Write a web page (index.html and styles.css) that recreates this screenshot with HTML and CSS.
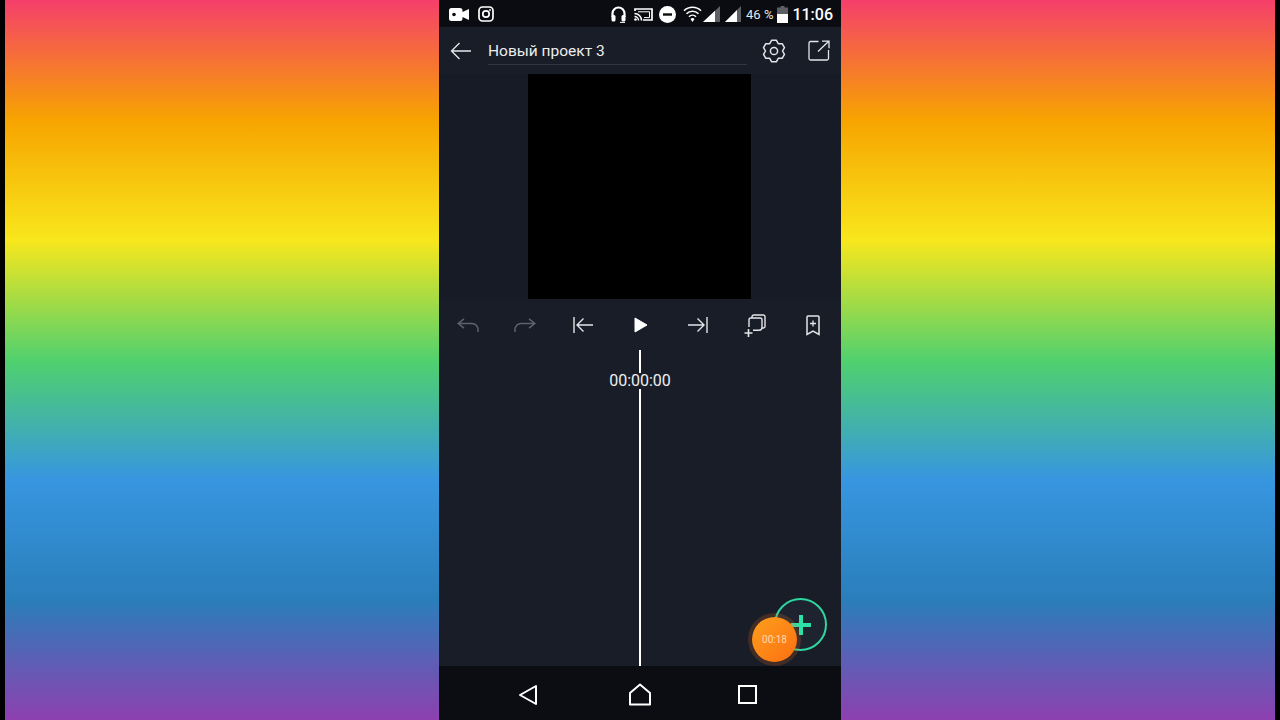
FILE: index.html
```html
<!DOCTYPE html>
<html lang="ru">
<head>
    <meta charset="UTF-8">
    <title>Новый проект 3</title>
    <link rel="stylesheet" href="styles.css">
</head>
<body>

    <div class="side"></div>

    <div class="phone">
        <div class="status">
            <svg width="20" height="13" viewBox="0 0 20 13"><path d="M2.500 0h8.500a2.500 2.500 0 0 1 2.500 2.500v1.500L20 1v11l-6.500-3v1.500A2.500 2.500 0 0 1 11 13H2.500A2.500 2.500 0 0 1 0 10.500v-8A2.500 2.500 0 0 1 2.500 0z" fill="#fff"/><circle cx="5" cy="6.500" r="1.800" fill="#0a0c11"/></svg>
            <svg width="16" height="16" viewBox="0 0 16 16" fill="none" stroke="#fff" stroke-width="1.700"><rect x="1" y="1" width="14" height="14" rx="3.500"/><circle cx="8" cy="8" r="3.200"/><circle cx="12" cy="4" r=".6" fill="#fff" stroke-width=".8"/></svg>
            <div class="status-right">
                <svg width="15" height="17" viewBox="0 0 15 17" fill="none" stroke="#fff" stroke-width="2.200"><path d="M1.500 11V7.500a6 6 0 0 1 12 0V11"/><rect x=".5" y="9" width="4" height="6.500" rx="1.500" fill="#fff" stroke="none"/><rect x="10.500" y="9" width="4" height="6.500" rx="1.500" fill="#fff" stroke="none"/><path d="M9 16.400h5" stroke-width="1"/></svg>
                <svg class="st-cast" width="19" height="13" viewBox="0 0 19 13" fill="none" stroke="#fff"><path d="M1 3V1h17v11H9" stroke-width="1.700"/><path d="M4 3.800h11.500v5.800H10" stroke-width="1"/><path d="M.5 5.500a7 7 0 0 1 7 7M.5 8.500a4 4 0 0 1 4 4" stroke-width="1.500"/><circle cx="1.500" cy="11.500" r="1.300" fill="#fff" stroke="none"/></svg>
                <svg class="st-minus" width="17" height="17" viewBox="0 0 17 17"><circle cx="8.500" cy="8.500" r="8.500" fill="#fff"/><rect x="4" y="7.300" width="9" height="2.400" fill="#0a0c11"/></svg>
                <svg class="st-wifi" width="19" height="16" viewBox="0 0 19 16" fill="none" stroke="#fff" stroke-width="1.600"><path d="M1 4.800a12 12 0 0 1 17 0M3.500 7.800a8.500 8.500 0 0 1 12 0M6 10.700a5 5 0 0 1 7 0"/><path d="M7.500 13l2 3 2-3a2.600 2.600 0 0 0-4 0z" fill="#fff" stroke="none"/></svg>
                <svg class="st-sig1" width="17" height="16" viewBox="0 0 17 16"><path d="M0 16L17 0v16z" fill="#5c5f64"/><path d="M0 16L12 4.700V16z" fill="#fff"/></svg>
                <svg class="st-sig2" width="16" height="16" viewBox="0 0 16 16"><path d="M0 16L16 0v16z" fill="#5c5f64"/><path d="M0 16L12 4v12z" fill="#fff"/></svg>
                <span class="st-pct">46 %</span>
                <svg class="st-batt" width="11" height="17" viewBox="0 0 11 17"><path d="M3.500 0h4v1.500H11V8H0V1.500h3.500z" fill="#5c5f64"/><rect y="8" width="11" height="9" fill="#fff"/></svg>
                <span class="st-time">11:06</span>
            </div>
        </div>

        <div class="topbar">
            <svg class="back" width="22" height="18" viewBox="0 0 22 18" fill="none" stroke="#e8e9eb" stroke-width="1.300"><path d="M21 9H1.500M9.500 1L1.500 9l8 8"/></svg>
            <div class="title">Новый проект 3</div>
            <svg class="gear" width="24" height="24" viewBox="0 0 24 24" fill="none" stroke="#e4e5e8" stroke-width="1.500" stroke-linejoin="round"><path d="M9.710 1.240h4.580l1.960 3.400h3.920l2.290 3.960L20.500 12l1.960 3.400-2.290 3.960h-3.920l-1.960 3.400H9.710l-1.960-3.400H3.830L1.540 15.400 3.500 12 1.540 8.600l2.290-3.960h3.920z"/><circle cx="12" cy="12" r="3.600"/></svg>
            <svg class="share" width="22" height="21" viewBox="0 0 22 21" fill="none" stroke="#e4e5e8" stroke-width="1.300"><path d="M10.500 1.500H2.500A1.500 1.500 0 0 0 1 3v15.500A1.500 1.500 0 0 0 2.500 20H19a1.500 1.500 0 0 0 1.500-1.500V10"/><path d="M10 11.500L20.500 1.500M14 1.200h7v7"/></svg>
        </div>

        <div class="preview">
            <div class="canvas"></div>
        </div>

        <div class="tools">
            <svg width="22" height="14" viewBox="0 0 22 14" fill="none" stroke="#5f626a" stroke-width="1.500"><path d="M7 .8L1.200 5.500 7 10.200M1.200 5.500H15a6 6 0 0 1 6 6V14"/></svg>
            <svg width="22" height="14" viewBox="0 0 22 14" fill="none" stroke="#5f626a" stroke-width="1.500"><path d="M15 .8l5.800 4.700L15 10.200M20.800 5.500H7a6 6 0 0 0-6 6V14"/></svg>
            <svg width="20" height="16" viewBox="0 0 20 16" fill="none" stroke="#e4e5e8" stroke-width="1.400"><path d="M1 0v16M20 8H4M10.500 1.500L4 8l6.500 6.500"/></svg>
            <svg class="play" width="14" height="16" viewBox="0 0 14 16"><path d="M1 1l12 7-12 7z" fill="#fff" stroke="#fff" stroke-linejoin="round"/></svg>
            <svg class="nudge" width="20" height="16" viewBox="0 0 20 16" fill="none" stroke="#e4e5e8" stroke-width="1.400"><path d="M19 0v16M0 8h16M9.500 1.500L16 8l-6.500 6.500"/></svg>
            <svg width="22" height="23" viewBox="0 0 22 23" fill="none" stroke="#e4e5e8" stroke-width="1.400"><path d="M8 4V2.800A1.800 1.800 0 0 1 9.800 1h9.400A1.800 1.800 0 0 1 21 2.800v9.400a1.800 1.800 0 0 1-1.800 1.800H18"/><path d="M5 13V5.800A1.800 1.800 0 0 1 6.800 4h9.400A1.800 1.800 0 0 1 18 5.800v7.400a3 3 0 0 1-3 3H9"/><path d="M4.500 15v8M.5 19h8" stroke-width="1.600"/></svg>
            <svg class="nudge" width="14" height="21" viewBox="0 0 14 21" fill="none" stroke="#e4e5e8" stroke-width="1.500"><path d="M2 1h10a1 1 0 0 1 1 1v17.500l-6-3.500-6 3.500V2a1 1 0 0 1 1-1z"/><path d="M7 5.500v6M4 8.500h6" stroke-width="1.300"/></svg>
        </div>

        <div class="timeline">
            <div class="playhead"></div>
            <div class="timecode">00:00:00</div>
            <div class="fab-add">
                <svg width="22" height="22" viewBox="0 0 22 22" stroke="#2fe0a6" stroke-width="4"><path d="M11 1v20M1 11h20"/></svg>
            </div>
            <div class="fab-rec">00:18</div>
        </div>

        <div class="navbar">
            <svg width="20" height="22" viewBox="0 0 20 22" fill="none" stroke="#fff" stroke-width="2" stroke-linejoin="round"><path d="M18 2v18L2 11z"/></svg>
            <svg class="nav-home" width="24" height="23" viewBox="0 0 24 23" fill="none" stroke="#fff" stroke-width="2" stroke-linejoin="round"><path d="M12 1.500L22 10v11.500H2V10z"/></svg>
            <svg width="19" height="19" viewBox="0 0 19 19" fill="none" stroke="#fff" stroke-width="2"><rect x="1" y="1" width="17" height="17"/></svg>
        </div>
    </div>

    <div class="side"></div>

</body>
</html>
```

FILE: styles.css
```css
* { box-sizing: border-box; }

html, body { height: 100%; }

body {
    margin: 0;
    padding: 0 5px;
    background: #000;
    display: flex;
    overflow: hidden;
    font-family: Roboto, "Liberation Sans", sans-serif;
    color: #fff;
}

.side {
    flex: 1;
    background: linear-gradient(180deg,
        #f53f6b 0,
        #f7a400 120px,
        #f8e71c 240px,
        #4fd06f 362px,
        #3796e0 480px,
        #2a7eba 600px,
        #8e40b0 720px);
}

.phone {
    width: 402px;
    height: 720px;
    display: flex;
    flex-direction: column;
    background: #191d28;
}

.status {
    height: 27px;
    background: #0a0c11;
    display: flex;
    align-items: center;
    padding: 1px 8px 0 10px;
    gap: 9px;
}

.status-right {
    margin-left: auto;
    display: flex;
    align-items: center;
}

.st-cast { margin-left: 8px; }
.st-minus { margin-left: 6px; }
.st-wifi { margin-left: 7px; }
.st-sig1 { margin-left: 1px; }
.st-sig2 { margin-left: 5px; }
.st-pct { font-size: 13px; color: #e6e6e6; margin-left: 5px; }
.st-batt { margin-left: 4px; }
.st-time { font-size: 16px; font-weight: 500; margin-left: 4px; }

.topbar {
    height: 47px;
    display: flex;
    align-items: center;
    padding: 0 11px;
}

.back { margin-right: 16px; }

.title {
    width: 259px;
    height: 28px;
    line-height: 28px;
    margin-top: 1px;
    font-size: 15.5px;
    color: #eceded;
    border-bottom: 1px solid #33363f;
}

.gear { margin-left: 15px; }
.share { margin-left: 22px; }

.preview {
    height: 225px;
    padding-right: 1px;
    display: flex;
    justify-content: center;
    background: #171b25;
}

.canvas { width: 223px; background: #000; }

.tools {
    height: 51px;
    padding-top: 1px;
    display: grid;
    grid-template-columns: repeat(7, 1fr);
    align-items: center;
    justify-items: center;
}

.play { margin-left: 3px; }
.nudge { margin-left: 1px; }

.timeline {
    position: relative;
    flex: 1;
}

.playhead {
    position: absolute;
    left: 200px;
    top: 0;
    bottom: 0;
    width: 2px;
    background: #fff;
}

.timecode {
    position: absolute;
    left: 169px;
    top: 23px;
    width: 64px;
    text-align: center;
    font-size: 16px;
    line-height: 16px;
    background: #191d28;
    color: #eef0f0;
}

.fab-add {
    position: absolute;
    left: 335px;
    top: 248px;
    width: 53px;
    height: 53px;
    border-radius: 50%;
    border: 2px solid #2fd6a0;
    background: #1e2330;
    display: flex;
    align-items: center;
    justify-content: center;
}

.fab-rec {
    position: absolute;
    left: 313px;
    top: 267px;
    width: 45px;
    height: 45px;
    border-radius: 50%;
    background: linear-gradient(135deg, #ff9f1c, #fb6f12);
    box-shadow: 0 0 0 4px rgba(250, 120, 30, 0.18);
    display: flex;
    align-items: center;
    justify-content: center;
    font-size: 10px;
    color: #ffd9b0;
}

.navbar {
    height: 54px;
    background: #0b0d13;
    display: flex;
    align-items: center;
    padding: 3px 84px 0 79px;
    justify-content: space-between;
}

.nav-home { margin-left: 3px; }
```
